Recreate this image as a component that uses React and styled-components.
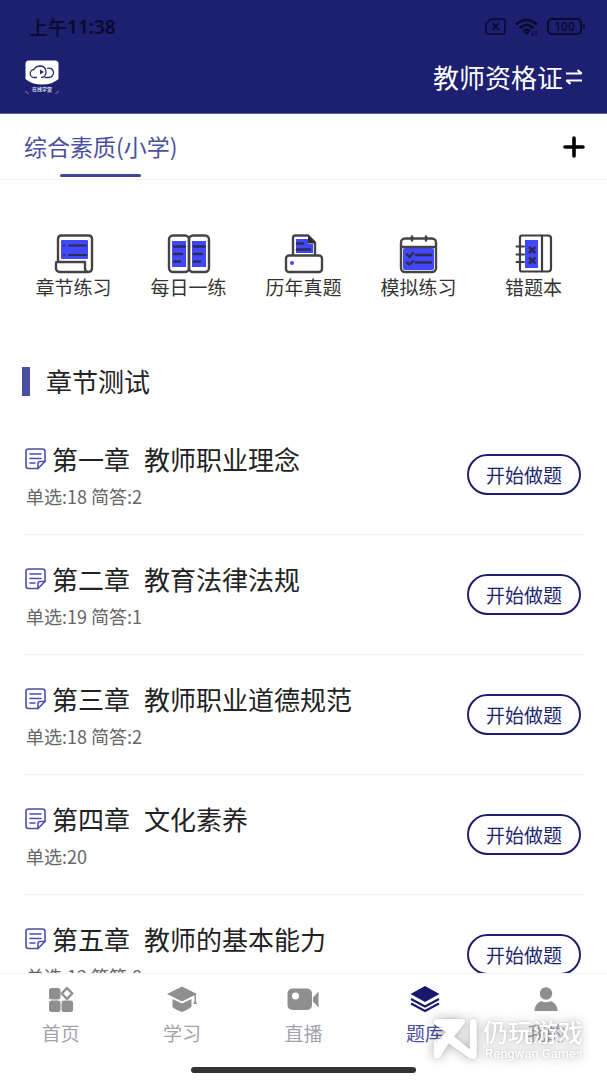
import React, { useState } from "react";
import styled, { createGlobalStyle } from "styled-components";

const tools = [
  { label: "章节练习", Icon: ScrollIcon },
  { label: "每日一练", Icon: BookIcon },
  { label: "历年真题", Icon: PrinterIcon },
  { label: "模拟练习", Icon: CalendarIcon },
  { label: "错题本", Icon: NotebookIcon },
];

const chapters = [
  { no: "第一章", title: "教师职业理念", count: "单选:18 简答:2" },
  { no: "第二章", title: "教育法律法规", count: "单选:19 简答:1" },
  { no: "第三章", title: "教师职业道德规范", count: "单选:18 简答:2" },
  { no: "第四章", title: "文化素养", count: "单选:20" },
  { no: "第五章", title: "教师的基本能力", count: "单选:12 简答:8" },
];

const tabs = [
  { label: "首页", Icon: HomeIcon },
  { label: "学习", Icon: StudyIcon },
  { label: "直播", Icon: LiveIcon },
  { label: "题库", Icon: BankIcon },
  { label: "我的", Icon: MineIcon },
];

export default function App() {
  const [active, setActive] = useState("题库");

  return (
    <Screen>
      <GlobalStyle />
      <Header>
        <StatusBar>
          <Clock>
            上午<b>11:38</b>
          </Clock>
          <StatusIcons />
        </StatusBar>
        <TitleBar>
          <LogoIcon />
          <SwitchButton type="button">
            教师资格证
            <SwapIcon />
          </SwitchButton>
        </TitleBar>
      </Header>

      <SubjectBar>
        <Subject type="button">综合素质(小学)</Subject>
        <AddButton type="button" aria-label="添加科目">
          <svg width="22" height="22" viewBox="0 0 22 22">
            <path
              d="M11 2v18M2 11h18"
              stroke="#000"
              strokeWidth="3.6"
              strokeLinecap="round"
            />
          </svg>
        </AddButton>
      </SubjectBar>

      <Content>
        <Tools>
          {tools.map(({ label, Icon }) => (
            <Tool key={label} type="button">
              <Icon />
              {label}
            </Tool>
          ))}
        </Tools>

        <SectionTitle>章节测试</SectionTitle>
        <ChapterList>
          {chapters.map((chapter) => (
            <Chapter key={chapter.no}>
              <ChapterInfo>
                <ChapterTitle>
                  <NoteIcon />
                  <span>{chapter.no}</span>
                  <ChapterName>{chapter.title}</ChapterName>
                </ChapterTitle>
                <Count>{chapter.count}</Count>
              </ChapterInfo>
              <StartButton type="button">开始做题</StartButton>
            </Chapter>
          ))}
        </ChapterList>
      </Content>

      <BottomNav>
        {tabs.map(({ label, Icon }) => (
          <NavItem
            key={label}
            type="button"
            $active={active === label}
            onClick={() => setActive(label)}
          >
            <Icon />
            {label}
          </NavItem>
        ))}
      </BottomNav>
      <HomeIndicator />

      <Watermark>
        <WatermarkIcon />
        <div>
          <WatermarkName>仍玩游戏</WatermarkName>
          <WatermarkSub>Rengwan Games</WatermarkSub>
        </div>
      </Watermark>
    </Screen>
  );
}

function StatusIcons() {
  return (
    <svg width="101" height="20" viewBox="0 0 101 20" fill="none">
      <g stroke="#090a2c" strokeWidth="1.6">
        <path d="M6 2h12q2 0 2 2v11q0 2-2 2H3q-2 0-2-2V7z" />
        <path d="M7.500 6l6.500 7M14 6l-6.500 7" strokeWidth="1.8" />
        <rect x="63" y="2" width="33" height="15" rx="4" strokeWidth="2" />
      </g>
      <g stroke="#090a2c" strokeWidth="2.500">
        <path d="M31 7.500q10.500-9 21 0" />
        <path d="M34.500 11q7-6 14 0" />
        <path d="M38 14.200q3.500-3 7 0" />
      </g>
      <path d="M41.500 18l-2.500-2.500q2.500-2 5 0z" fill="#090a2c" />
      <path d="M48 14v5M46.500 17l1.500 2M51 19v-5M52.500 16L51 14" stroke="#090a2c" />
      <rect x="98" y="7" width="2" height="5" rx="1" fill="#090a2c" />
      <text
        x="79.500"
        y="14"
        textAnchor="middle"
        fontSize="12"
        fontWeight="600"
        fontFamily="Noto Sans, sans-serif"
        fill="#090a2c"
      >
        100
      </text>
    </svg>
  );
}

function LogoIcon() {
  return (
    <svg width="34" height="34" viewBox="0 0 34 34" fill="none">
      <path
        d="M0.500 19V4q0-3.500 3.500-3.500h26q3.500 0 3.500 3.500v15q-6 5.500-16.500 5.500T.5 19z"
        fill="#fff"
      />
      <path
        d="M12 17.500H9.500a4 4 0 0 1-.5-8q1.500-3.500 6.500-3.500 5.500.5 5.500 6a5 5 0 0 1-5 5.500"
        stroke="#2a2d70"
        strokeWidth="1.300"
      />
      <path d="M22 8.500a4.700 4.700 0 1 1 1.500 9h-4" stroke="#2a2d70" strokeWidth="1.300" />
      <path d="M15 9.500l4 2.500-4 2.500z" fill="#2a2d70" />
      <path d="M.5 31q.5 2 3 2.500M33.500 31q-.5 2-3 2.500" stroke="#8587b4" />
      <text
        x="17"
        y="31"
        textAnchor="middle"
        fontSize="5"
        fontWeight="700"
        fontFamily="Noto Sans CJK SC, sans-serif"
        fill="#d8d8ec"
      >
        在线学堂
      </text>
    </svg>
  );
}

function SwapIcon() {
  return (
    <svg width="18" height="18" viewBox="0 0 18 18" fill="none">
      <path
        d="M1 5.500h15.500l-4-3.500M17 12.500H1.500l4 3.500"
        stroke="#fff"
        strokeWidth="2.200"
        strokeLinejoin="bevel"
      />
    </svg>
  );
}

function ScrollIcon() {
  return (
    <svg width="40" height="40" viewBox="0 0 40 40" fill="none">
      <rect x="7" y="6" width="27" height="19" rx="1" fill="#4247fb" />
      <path
        d="M4 28V5q0-3.500 3.500-3.500h27q3.500 0 3.500 3.500v29q0 4-4 4H6q-4 0-4-4v-5q0-1 1-1h28v6q0 4 3 4"
        stroke="#444"
        strokeWidth="2.400"
        strokeLinejoin="round"
      />
      <g stroke="#2c2c50" strokeWidth="2.200" strokeLinecap="round">
        <path d="M10 11.500h.1M15 11.500h17M10 21h.1M15 21h17" />
      </g>
    </svg>
  );
}

function BookIcon() {
  return (
    <svg width="44" height="40" viewBox="0 0 44 40" fill="none">
      <rect x="5" y="7" width="14" height="26" fill="#4247fb" />
      <rect x="25" y="7" width="14" height="26" fill="#4247fb" />
      <g stroke="#444" strokeWidth="2.400">
        <rect x="2" y="1.500" width="20" height="36.500" rx="4" />
        <rect x="22" y="1.500" width="20" height="36.500" rx="4" />
      </g>
      <g stroke="#2c2c50" strokeWidth="2.400" strokeLinecap="round">
        <path d="M7 12.500h11M7 20h8M7 27.500h6M27 12.500h11M27 20h8M27 27.500h6" />
      </g>
    </svg>
  );
}

function PrinterIcon() {
  return (
    <svg width="40" height="40" viewBox="0 0 40 40" fill="none">
      <path d="M12 5h12v5h5v9H12z" fill="#4247fb" />
      <path d="M9 21V3.500q0-2 2-2h13l7 7V21" stroke="#444" strokeWidth="2.400" />
      <path d="M24 1.500l8 8h-8z" fill="#2c2c2c" />
      <path d="M13 9.500h6M13 15.500h13" stroke="#2c2c50" strokeWidth="2.600" strokeLinecap="round" />
      <rect x="2" y="21.500" width="36" height="16.500" rx="3" fill="#fff" stroke="#444" strokeWidth="2.400" />
      <circle cx="8" cy="29" r="2" fill="#4247fb" />
    </svg>
  );
}

function CalendarIcon() {
  return (
    <svg width="40" height="40" viewBox="0 0 40 40" fill="none">
      <rect x="4" y="14" width="31" height="22" rx="2" fill="#4247fb" />
      <rect x="2" y="4.500" width="35" height="33.500" rx="4" stroke="#444" strokeWidth="2.400" />
      <path d="M2 13h35M13 1.500v6M27 1.500v6" stroke="#444" strokeWidth="2.400" />
      <path
        d="M8 20.500l2.500 2.500L14 19M8 28.500l2.500 2 3.500-3.500M17 21h15M17 28.500h15"
        stroke="#2c2c50"
        strokeWidth="2.400"
        strokeLinecap="round"
      />
    </svg>
  );
}

function NotebookIcon() {
  return (
    <svg width="40" height="40" viewBox="0 0 40 40" fill="none">
      <rect x="11" y="6" width="13" height="28" fill="#4247fb" />
      <path
        d="M8 1.500h26q3 0 3 3v30q0 3-3 3H8q-2 0-2-2v-32q0-2 2-2zM28 1.500v36"
        stroke="#3d3d3d"
        strokeWidth="2.200"
      />
      <path d="M2.500 12.500H10M2.500 20.500H10M2.500 28H10" stroke="#3d3d3d" strokeWidth="2" strokeLinecap="round" />
      <path
        d="M15 13l6.500 6M21.500 13L15 19M15 23.500l6.500 6M21.500 23.500l-6.500 6"
        stroke="#2c2c50"
        strokeWidth="2.400"
      />
    </svg>
  );
}

function NoteIcon() {
  return (
    <svg width="21" height="22" viewBox="0 0 21 22" fill="none">
      <g stroke="#4b4fae" strokeWidth="1.600" strokeLinecap="round" strokeLinejoin="round">
        <path d="M20 13.500V3.500q0-2.500-2.500-2.500H3.500Q1 1 1 3.500V18q0 2.500 2.500 2.500H13z" />
        <path d="M13 20.500v-5q0-2 2-2h5" />
        <path d="M5 6h11M5 10.500h11M5 15h5" />
      </g>
    </svg>
  );
}

function HomeIcon() {
  return (
    <svg width="30" height="28" viewBox="0 0 30 28">
      <g fill="#8f8f8f">
        <rect x="3" y="3" width="11.500" height="11.500" rx="2.500" />
        <rect x="3" y="15.500" width="11.500" height="11.500" rx="2.500" />
        <rect x="15.500" y="15.500" width="11.500" height="11.500" rx="2.500" />
      </g>
      <path
        d="M21 3.200l5.300 5.300L21 13.800l-5.300-5.300z"
        fill="none"
        stroke="#8f8f8f"
        strokeWidth="2.400"
        strokeLinejoin="round"
      />
    </svg>
  );
}

function StudyIcon() {
  return (
    <svg width="32" height="28" viewBox="0 0 32 28" fill="#8f8f8f">
      <path d="M16 1.500L31 9l-15 7.500L1 9z" />
      <path d="M6.500 14l9.500 4.500 9.500-4.500v8q-3 2-5 3t-4.500 2q-2.500-1-5-2t-4.500-3z" />
      <path d="M28.500 9h1.400v7l1 3h-3.400l1-3z" />
    </svg>
  );
}

function LiveIcon() {
  return (
    <svg width="32" height="28" viewBox="0 0 32 28">
      <rect x="0.500" y="3.500" width="24.500" height="21.500" rx="5" fill="#8f8f8f" />
      <path d="M31.500 6.500v16L26 16.500v-4z" fill="#8f8f8f" />
      <circle cx="8.500" cy="11" r="3.500" fill="#fff" />
    </svg>
  );
}

function BankIcon() {
  return (
    <svg width="30" height="28" viewBox="0 0 30 28">
      <path d="M15 1L29.500 9 15 17 .5 9z" fill="#17196f" />
      <path
        d="M1 14l14 7.500L29 14M1 18.500L15 26l14-7.500"
        fill="none"
        stroke="#17196f"
        strokeWidth="2"
      />
    </svg>
  );
}

function MineIcon() {
  return (
    <svg width="28" height="28" viewBox="0 0 28 28" fill="#8f8f8f">
      <circle cx="14" cy="8.500" r="6.200" />
      <path d="M2.500 26q0-7 6.500-10 5 2.500 10 0 6.500 3 6.500 10z" />
    </svg>
  );
}

function WatermarkIcon() {
  return (
    <svg width="44" height="40" viewBox="0 0 124 114" fill="#fff">
      <path d="M8 0h76q11 3 5 13L60 50l44 36V8q1-8 10-8t10 8v96q-1 10-11 10-8 0-14-5L44 70 22 106q-4 8-12 8-9-1-9-10V66q1-8 9-10l10-1 16-18L4 16Q0 12 1 7q1-6 7-7z" />
    </svg>
  );
}

const GlobalStyle = createGlobalStyle`
  * {
    box-sizing: border-box;
  }
  body {
    margin: 0;
    background: #fff;
    color: #222;
    font-family: "Noto Sans CJK SC", sans-serif;
  }
  button {
    padding: 0;
    border: 0;
    background: none;
    color: inherit;
    font-family: inherit;
    cursor: pointer;
  }
  svg {
    display: block;
    flex: none;
  }
`;

const Screen = styled.div`
  position: relative;
  display: flex;
  flex-direction: column;
  height: 100vh;
  overflow: hidden;
`;

const Header = styled.header`
  flex: none;
  padding: 12px 24px 16px;
  background: #1d1f70;
  border-bottom: 1px solid #5b5c98;
`;

const StatusBar = styled.div`
  display: flex;
  justify-content: space-between;
  align-items: center;
  height: 30px;
  padding-left: 5px;
  margin-right: -3px;
`;

const Clock = styled.div`
  display: flex;
  align-items: center;
  color: #090a2c;
  font-size: 19px;
  font-weight: 500;
  line-height: 30px;

  > b {
    font-family: "Noto Sans", sans-serif;
    font-weight: 600;
  }
`;

const TitleBar = styled.div`
  display: flex;
  justify-content: space-between;
  align-items: center;
  height: 40px;
  margin-top: 15px;
  padding-left: 1px;
`;

const SwitchButton = styled.button`
  display: flex;
  align-items: center;
  gap: 2px;
  color: #fff;
  font-size: 26px;
  line-height: 40px;
`;

const SubjectBar = styled.div`
  flex: none;
  display: flex;
  justify-content: space-between;
  align-items: center;
  height: 66px;
  padding: 0 22px 0 24px;
  border-bottom: 1px solid #f3f3f3;
`;

const Subject = styled.button`
  display: flex;
  flex-direction: column;
  align-items: center;
  color: #4b4f9f;
  font-size: 23px;
  line-height: 32px;

  &::after {
    content: "";
    width: 81px;
    height: 3px;
    margin: 12px 0 -14px;
    border-radius: 2px;
    background: #41459c;
  }
`;

const AddButton = styled.button`
  display: flex;
`;

const Content = styled.main`
  flex: 1;
  min-height: 0;
  overflow-y: auto;
  scrollbar-width: none;
`;

const Tools = styled.div`
  display: grid;
  grid-template-columns: repeat(5, 1fr);
  padding: 54px 16px 0;
`;

const Tool = styled.button`
  display: flex;
  flex-direction: column;
  align-items: center;
  color: #333;
  font-size: 19px;
  line-height: 26px;
`;

const SectionTitle = styled.h2`
  display: flex;
  align-items: center;
  gap: 16px;
  margin: 63px 22px 0;
  font-size: 26px;
  font-weight: 400;
  line-height: 36px;

  &::before {
    content: "";
    width: 8px;
    height: 29px;
    background: #4b4f9f;
  }
`;

const ChapterList = styled.ul`
  margin: 0;
  padding: 16px 24px 0;
  list-style: none;
`;

const Chapter = styled.li`
  display: flex;
  justify-content: space-between;
  align-items: center;
  height: 120px;
  padding-right: 2px;
  border-bottom: 1px solid #f0f0f0;
`;

const ChapterInfo = styled.div`
  display: flex;
  flex-direction: column;
  gap: 4px;
  padding-bottom: 2px;
`;

const ChapterTitle = styled.div`
  display: flex;
  align-items: center;
  gap: 6px;
  padding-left: 1px;
  font-size: 26px;
  line-height: 40px;
`;

const ChapterName = styled.span`
  margin-left: 8px;
`;

const Count = styled.div`
  padding-left: 2px;
  color: #666;
  font-size: 18px;
  line-height: 26px;
`;

const StartButton = styled.button`
  width: 114px;
  height: 41px;
  border: 2px solid #1d1f70;
  border-radius: 21px;
  color: #1d1f70;
  font-size: 19px;
  line-height: 28px;
`;

const BottomNav = styled.nav`
  flex: none;
  display: grid;
  grid-template-columns: repeat(5, 1fr);
  padding-top: 11px;
  border-top: 1px solid #f3f3f3;
  background: #fff;
`;

const NavItem = styled.button`
  display: flex;
  flex-direction: column;
  align-items: center;
  gap: 6px;
  color: ${(props) => (props.$active ? "#4b4f9f" : "#a3a3aa")};
  font-size: 19px;
  line-height: 28px;
`;

const HomeIndicator = styled.div`
  flex: none;
  width: 37%;
  height: 6px;
  margin: 20px auto 7px;
  border-radius: 3px;
  background: #333;
`;

const Watermark = styled.div`
  position: absolute;
  right: 24px;
  bottom: 18px;
  display: flex;
  align-items: center;
  gap: 6px;
  color: #fff;
  pointer-events: none;
  opacity: 0.85;
  filter: drop-shadow(0 0 1px rgba(0, 0, 0, 0.2))
    drop-shadow(0 0 6px rgba(0, 0, 0, 0.35));
`;

const WatermarkName = styled.div`
  font-size: 25px;
  font-weight: 500;
  line-height: 30px;
`;

const WatermarkSub = styled.div`
  padding-left: 2px;
  font-family: Roboto, sans-serif;
  font-size: 13px;
  font-weight: 500;
  line-height: 16px;
`;
